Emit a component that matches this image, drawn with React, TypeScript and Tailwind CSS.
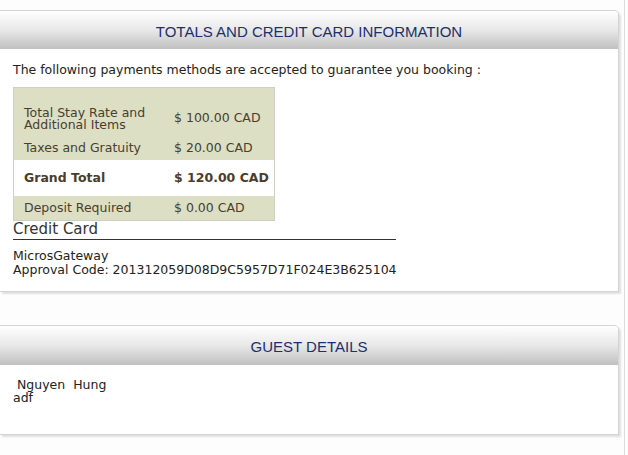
const rows = [
  { label: "Total Stay Rate and\nAdditional Items", value: "$ 100.00 CAD", h: "h-[48px] pt-[13px]" },
  { label: "Taxes and Gratuity", value: "$ 20.00 CAD", h: "h-[24px]" },
]

function PanelHeader({ title, h }: { title: string; h: string }) {
  return (
    <div
      className={`flex ${h} items-center justify-center rounded-tr-[4px] bg-gradient-to-b from-white via-[#e8e8e8] to-[#c0c0c0] pt-[4px] font-['Liberation_Sans',Arial,sans-serif] text-[15px] text-[#1b2f6e]`}
    >
      {title}
    </div>
  )
}

export default function App() {
  return (
    <div className="h-[455px] w-[628px] overflow-hidden bg-[#fdfdfd] font-['DejaVu_Sans',Verdana,sans-serif] text-[12.5px] text-[#222]">
      <div className="h-full w-[625px] border-r border-[#dcdcdc] pt-[10px]">
        {/* totals */}
        <section className="w-[619px] rounded-tr-[5px] border-t border-r border-b border-[#d4d4d4] bg-white shadow-[2px_2px_2px_rgba(0,0,0,0.12)]">
          <PanelHeader title="TOTALS AND CREDIT CARD INFORMATION" h="h-[38px]" />
          <div className="px-[13px] pb-[14px] pt-[13px]">
            <p className="leading-[15px]">The following payments methods are accepted to guarantee you booking :</p>
            <div className="mt-[10px] w-[262px] border border-[#cfd0c4] bg-[#dcdfc4] text-[#4b3d2c]">
              {rows.map((r) => (
                <div key={r.value} className={`flex items-center ${r.h}`}>
                  <div className="w-[160px] whitespace-pre-line pl-[10px] leading-[12px]">{r.label}</div>
                  <div>{r.value}</div>
                </div>
              ))}
              <div className="flex h-[36px] items-center bg-white font-bold">
                <div className="w-[160px] pl-[10px]">Grand Total</div>
                <div>$ 120.00 CAD</div>
              </div>
              <div className="flex h-[24px] items-center">
                <div className="w-[160px] pl-[10px]">Deposit Required</div>
                <div>$ 0.00 CAD</div>
              </div>
            </div>
            <div className="w-[383px] border-b border-[#333] pb-[2px] text-[15px] leading-[16px] text-[#333]">Credit Card</div>
            <div className="mt-[9px] leading-[14px]">
              <div>MicrosGateway</div>
              <div>Approval Code: 201312059D08D9C5957D71F024E3B625104</div>
            </div>
          </div>
        </section>

        {/* guest */}
        <section className="mt-[33px] w-[619px] rounded-tr-[5px] border-t border-r border-b border-[#d4d4d4] bg-white shadow-[2px_2px_2px_rgba(0,0,0,0.12)]">
          <PanelHeader title="GUEST DETAILS" h="h-[39px]" />
          <div className="h-[69px] px-[13px] pt-[13px]">
            <p className="whitespace-pre leading-[13px]">{" Nguyen  Hung\nadf"}</p>
          </div>
        </section>
      </div>
    </div>
  )
}
